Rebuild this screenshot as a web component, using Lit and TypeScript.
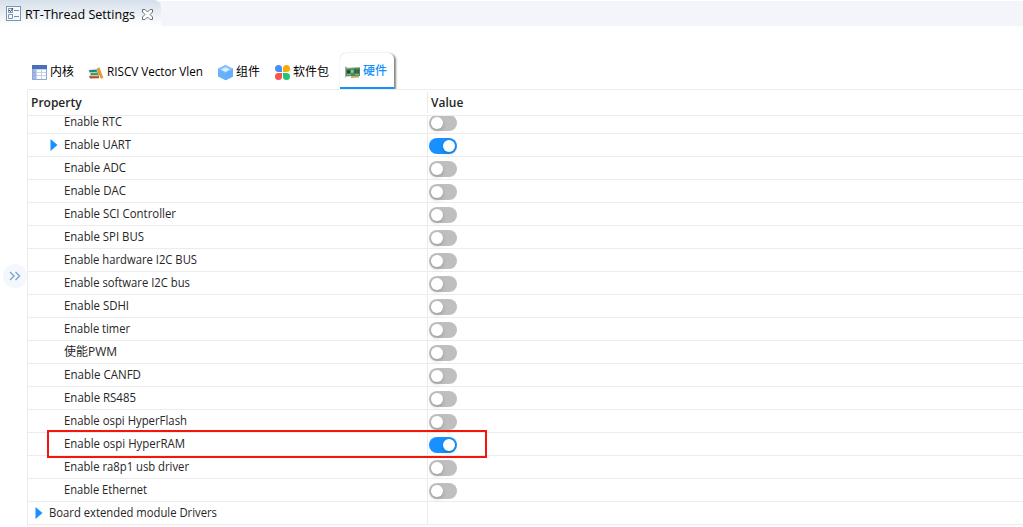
import { LitElement, html, css, svg } from "lit";
import { customElement, property } from "lit/decorators.js";
import { classMap } from "lit/directives/class-map.js";

@customElement("toggle-switch")
class ToggleSwitch extends LitElement {
  @property({ type: Boolean }) on = false;
  static styles = css`
    :host { display: block; }
    .track { box-sizing: border-box; width: 28px; height: 16px; padding: 2px; border-radius: 8px; background: #bfbfbf; display: flex; }
    .on { background: #1890ff; justify-content: flex-end; }
    .knob { width: 12px; height: 12px; border-radius: 50%; background: #fff; box-shadow: 0 2px 4px rgba(0, 35, 11, 0.2); }
  `;
  render() {
    return html`<div class=${classMap({ track: true, on: this.on })}><div class="knob"></div></div>`;
  }
}

const icons = {
  kernel: svg`<rect x="0" y="0" width="15" height="15" fill="#c3d2ee"/><rect width="15" height="4" fill="#4a6fb5"/><rect y="4" width="4" height="11" fill="#a3b8e4"/><path d="M5 5h4v2H5zM10 5h4v2h-4zM5 8h4v2H5zM10 8h4v2h-4zM5 11h4v3H5zM10 11h4v3h-4z" fill="#fff"/><path d="M0 7.500h4M0 10.500h4" stroke="#8ba5da" stroke-width=".7"/><path d="M.5 4v10.500h14V4" stroke="#8fa8da" fill="none"/>`,
  books: svg`<path d="M0 5l7.500-.5 1 2.300-8 .6z" fill="#23808c"/><path d="M1.500 8l7.500-.8 1 2.600-8.500.7z" fill="#3e9b61"/><path d="M0 11l10-.5v2.700L1 13.500z" fill="#b5512d"/><path d="M2 11h7M2 7.600h6" stroke="#d9c9a0" stroke-width=".6"/><path d="M7.500 3.600l3-1.400L14.500 13l-2.700.6z" fill="#e9a33b"/><path d="M8.500 4l3.800 9.300" stroke="#c97a25" stroke-width=".6"/>`,
  cube: svg`<path d="M7.500 0L15 3.800v7.700L7.500 15.300 0 11.500V3.800z" fill="#69b1fd"/><path d="M7.500 0L15 3.800 7.500 8 0 3.800z" fill="#83c2ff"/><path d="M7.500 2.300L12 4.500 7.500 7 3 4.500z" fill="#d9edff"/><path d="M7.500 8L15 3.800v7.700L7.500 15.300z" fill="#64aefc"/>`,
  petals: svg`<path d="M3.500 0a3.500 3.500 0 0 1 3.500 3.500V7H3.500a3.500 3.500 0 0 1 0-7z" fill="#4a8df8"/><path d="M11.500 0a3.500 3.500 0 0 0-3.500 3.500V7h3.500a3.500 3.500 0 0 0 0-7z" fill="#f8ab00"/><path d="M3.500 15A3.500 3.500 0 0 0 7 11.500V8H3.500a3.500 3.500 0 0 0 0 7z" fill="#f5554a"/><path d="M11.500 15A3.500 3.500 0 0 1 8 11.500V8h3.500a3.500 3.500 0 0 1 0 7z" fill="#20c677"/>`,
  board: svg`<path d="M.7 3v10.500M0 3.300h2" stroke="#999"/><path d="M1 4.300l14-.8v8.500L1 12.300z" fill="#4b8a5b"/><path d="M1 4.300l14-.8" stroke="#92b898" stroke-width=".8"/><rect x="2" y="6.300" width="3" height="3" fill="#234b32"/><rect x="6" y="5.800" width="2.500" height="3" fill="#9cbf99"/><rect x="9.500" y="5.300" width="2" height="4" fill="#275c3b"/><rect x="12.500" y="5.300" width="1.500" height="4" fill="#275c3b"/><path d="M2 10.600h4M10 10.600h4" stroke="#9fc993" stroke-width=".8"/><path d="M6 12.300l8-.5v1.700l-8 .5z" fill="#cda75c"/>`,
};

const tabs = [
  { id: "kernel", label: "内核", icon: icons.kernel },
  { id: "vector", label: "RISCV Vector Vlen", icon: icons.books },
  { id: "component", label: "组件", icon: icons.cube },
  { id: "package", label: "软件包", icon: icons.petals },
  { id: "hardware", label: "硬件", icon: icons.board },
];

interface Row { label: string; on?: boolean; arrow?: boolean; root?: boolean; marked?: boolean; width: number; }
const rows: Row[] = [
  { label: "Enable RTC", width: 58 },
  { label: "Enable UART", on: true, arrow: true, width: 67 },
  { label: "Enable ADC", width: 62 },
  { label: "Enable DAC", width: 62 },
  { label: "Enable SCI Controller", width: 112 },
  { label: "Enable SPI BUS", width: 80 },
  { label: "Enable hardware I2C BUS", width: 133 },
  { label: "Enable software I2C bus", width: 126 },
  { label: "Enable SDHI", width: 65 },
  { label: "Enable timer", width: 66 },
  { label: "使能PWM", width: 53 },
  { label: "Enable CANFD", width: 77 },
  { label: "Enable RS485", width: 72 },
  { label: "Enable ospi HyperFlash", width: 123 },
  { label: "Enable ospi HyperRAM", on: true, marked: true, width: 121 },
  { label: "Enable ra8p1 usb driver", width: 125 },
  { label: "Enable Ethernet", width: 83 },
  { label: "Board extended module Drivers", arrow: true, root: true, width: 168 },
];

@customElement("app-root")
class AppRoot extends LitElement {
  static styles = css`
    :host { display: block; width: 1023px; height: 527px; overflow: hidden; background: #fff; color: #262626; font: 12px/22px "Open Sans", "Noto Sans CJK SC", sans-serif; }
    svg { display: block; flex: none; }
    .bar { display: flex; height: 26px; background: linear-gradient(#fff 1px, #f3f5fb 1px); }
    .file { box-sizing: border-box; width: 161px; height: 26px; padding: 1px 0 0 6px; display: flex; align-items: center; border-radius: 0 7px 0 0; background: linear-gradient(#d5dfea, #fff); color: #000; }
    .file .title { width: 112px; margin-left: 4px; padding-top: 2px; white-space: nowrap; }
    .file .close { margin: 1px 0 0 5px; }
    .body { display: flex; height: 501px; }
    .side { width: 27px; padding-top: 238px; flex: none; }
    .expand { margin-left: 3px; width: 24px; height: 24px; border-radius: 50%; background: #f4f7fb; display: grid; place-items: center; }
    .main { flex: 1; padding-top: 26px; }
    .tabs { display: flex; height: 37px; color: #000; }
    .tab { display: flex; align-items: center; height: 37px; box-sizing: border-box; padding: 1px 0 0 5px; white-space: nowrap; }
    .tab > svg:first-child { margin: 3px 3px 0 0; }
    .tab > span, .tab > .text { margin-top: 1px; }
    .kernel { width: 57px; }
    .vector { width: 129px; }
    .component { width: 57px; }
    .package { width: 70px; }
    .hardware { width: 54px; border-bottom: 2px solid #1890ff; border-radius: 6px 6px 0 0; box-shadow: 2px 1px 2px #888, 0 0 1px #bbb; color: #1890ff; font-weight: 500; background: #fff; height: 36px; margin-top: 1px; padding-top: 1px; clip-path: inset(-2px -5px 0 -2px); }
    .grid { border: 1px solid #ececec; border-right: 0; border-bottom: 0; height: 437px; box-sizing: border-box; }
    .head { display: flex; height: 25px; align-items: center; border-bottom: 1px solid #ececec; font-weight: 600; color: #262626; }
    .head .name { width: 399px; padding: 1px 0 0 3px; box-sizing: border-box; }
    .head .value { border-left: 1px solid #ececec; line-height: 20px; padding: 1px 0 0 3px; }
    .rows { height: 409px; overflow: hidden; display: flex; flex-direction: column; justify-content: flex-end; }
    .row { display: flex; position: relative; height: 22px; flex: none; border-bottom: 1px solid #ececec; }
    .cell { width: 399px; box-sizing: border-box; display: flex; padding-left: 22px; line-height: 20px; }
    .root { padding-left: 7px; }
    .arrow { width: 14px; padding-top: 5px; flex: none; }
    .cell > .text { margin-top: 1px; }
    .switch { border-left: 1px solid #ececec; padding: 4px 0 0 1px; box-sizing: border-box; height: 22px; }
    .mark { position: absolute; left: 19px; top: -3px; width: 440px; height: 28px; box-sizing: border-box; border: 2px solid #f6150b; z-index: 1; }
  `;
  label(text: string, width: number, size = 12) {
    return html`<svg class="text" width=${width} height="20" overflow="visible"><text x="0" y="14" font-size=${size} fill="currentColor" textLength=${width} lengthAdjust="spacingAndGlyphs">${text}</text></svg>`;
  }
  render() {
    return html`
      <div class="bar">
        <div class="file">
          <svg width="15" height="15" viewBox="0 0 15 15" fill="none"><rect x=".5" y=".5" width="14" height="14" fill="#f6fafd" stroke="#7e95b1"/><path d="M2.500 2.500h4v4h-4zM2.500 8.500h4v4h-4z" stroke="#8295ac"/><path d="M3 4l1.500 1.500L7 2" stroke="#263f5b"/><path d="M8 4.500h5M8 10.500h5" stroke="#6d8fba"/></svg>
          <span class="title">${this.label("RT-Thread Settings", 110, 12.6)}</span>
          <svg class="close" width="11" height="11" viewBox="0 0 11 11"><path d="M.5.5h2.500l2.500 2.500L8 .5h2.500V3L8 5.500 10.500 8v2.500H8L5.500 8 3 10.500H.5V8L3 5.500.5 3z" fill="#fff" stroke="#6c6c6c"/></svg>
        </div>
      </div>
      <div class="body">
        <div class="side"><div class="expand"><svg width="12" height="10" viewBox="0 0 12 10" fill="none" stroke="#82a9d3" stroke-width="1.500"><path d="M1 1l4 4-4 4M6.500 1l4 4-4 4"/></svg></div></div>
        <div class="main">
          <div class="tabs">${tabs.map(t => html`<div class="tab ${t.id}"><svg width="15" height="16" viewBox="0 0 15 16">${t.icon}</svg>${t.id === "vector" ? this.label(t.label, 96) : html`<span>${t.label}</span>`}</div>`)}</div>
          <div class="grid">
            <div class="head"><div class="name">Property</div><div class="value">Value</div></div>
            <div class="rows">${rows.map(r => html`
              <div class="row">
                <div class=${classMap({ cell: true, root: !!r.root })}>
                  <div class="arrow">${r.arrow ? html`<svg width="8" height="12" viewBox="0 0 8 12"><path d="M.5 0L7.500 6 .5 12z" fill="#1890ff"/></svg>` : ""}</div>
                  ${this.label(r.label, r.width)}
                </div>
                <div class="switch">${r.root ? "" : html`<toggle-switch ?on=${!!r.on}></toggle-switch>`}</div>
                ${r.marked ? html`<div class="mark"></div>` : ""}
              </div>`)}</div>
          </div>
        </div>
      </div>`;
  }
}
